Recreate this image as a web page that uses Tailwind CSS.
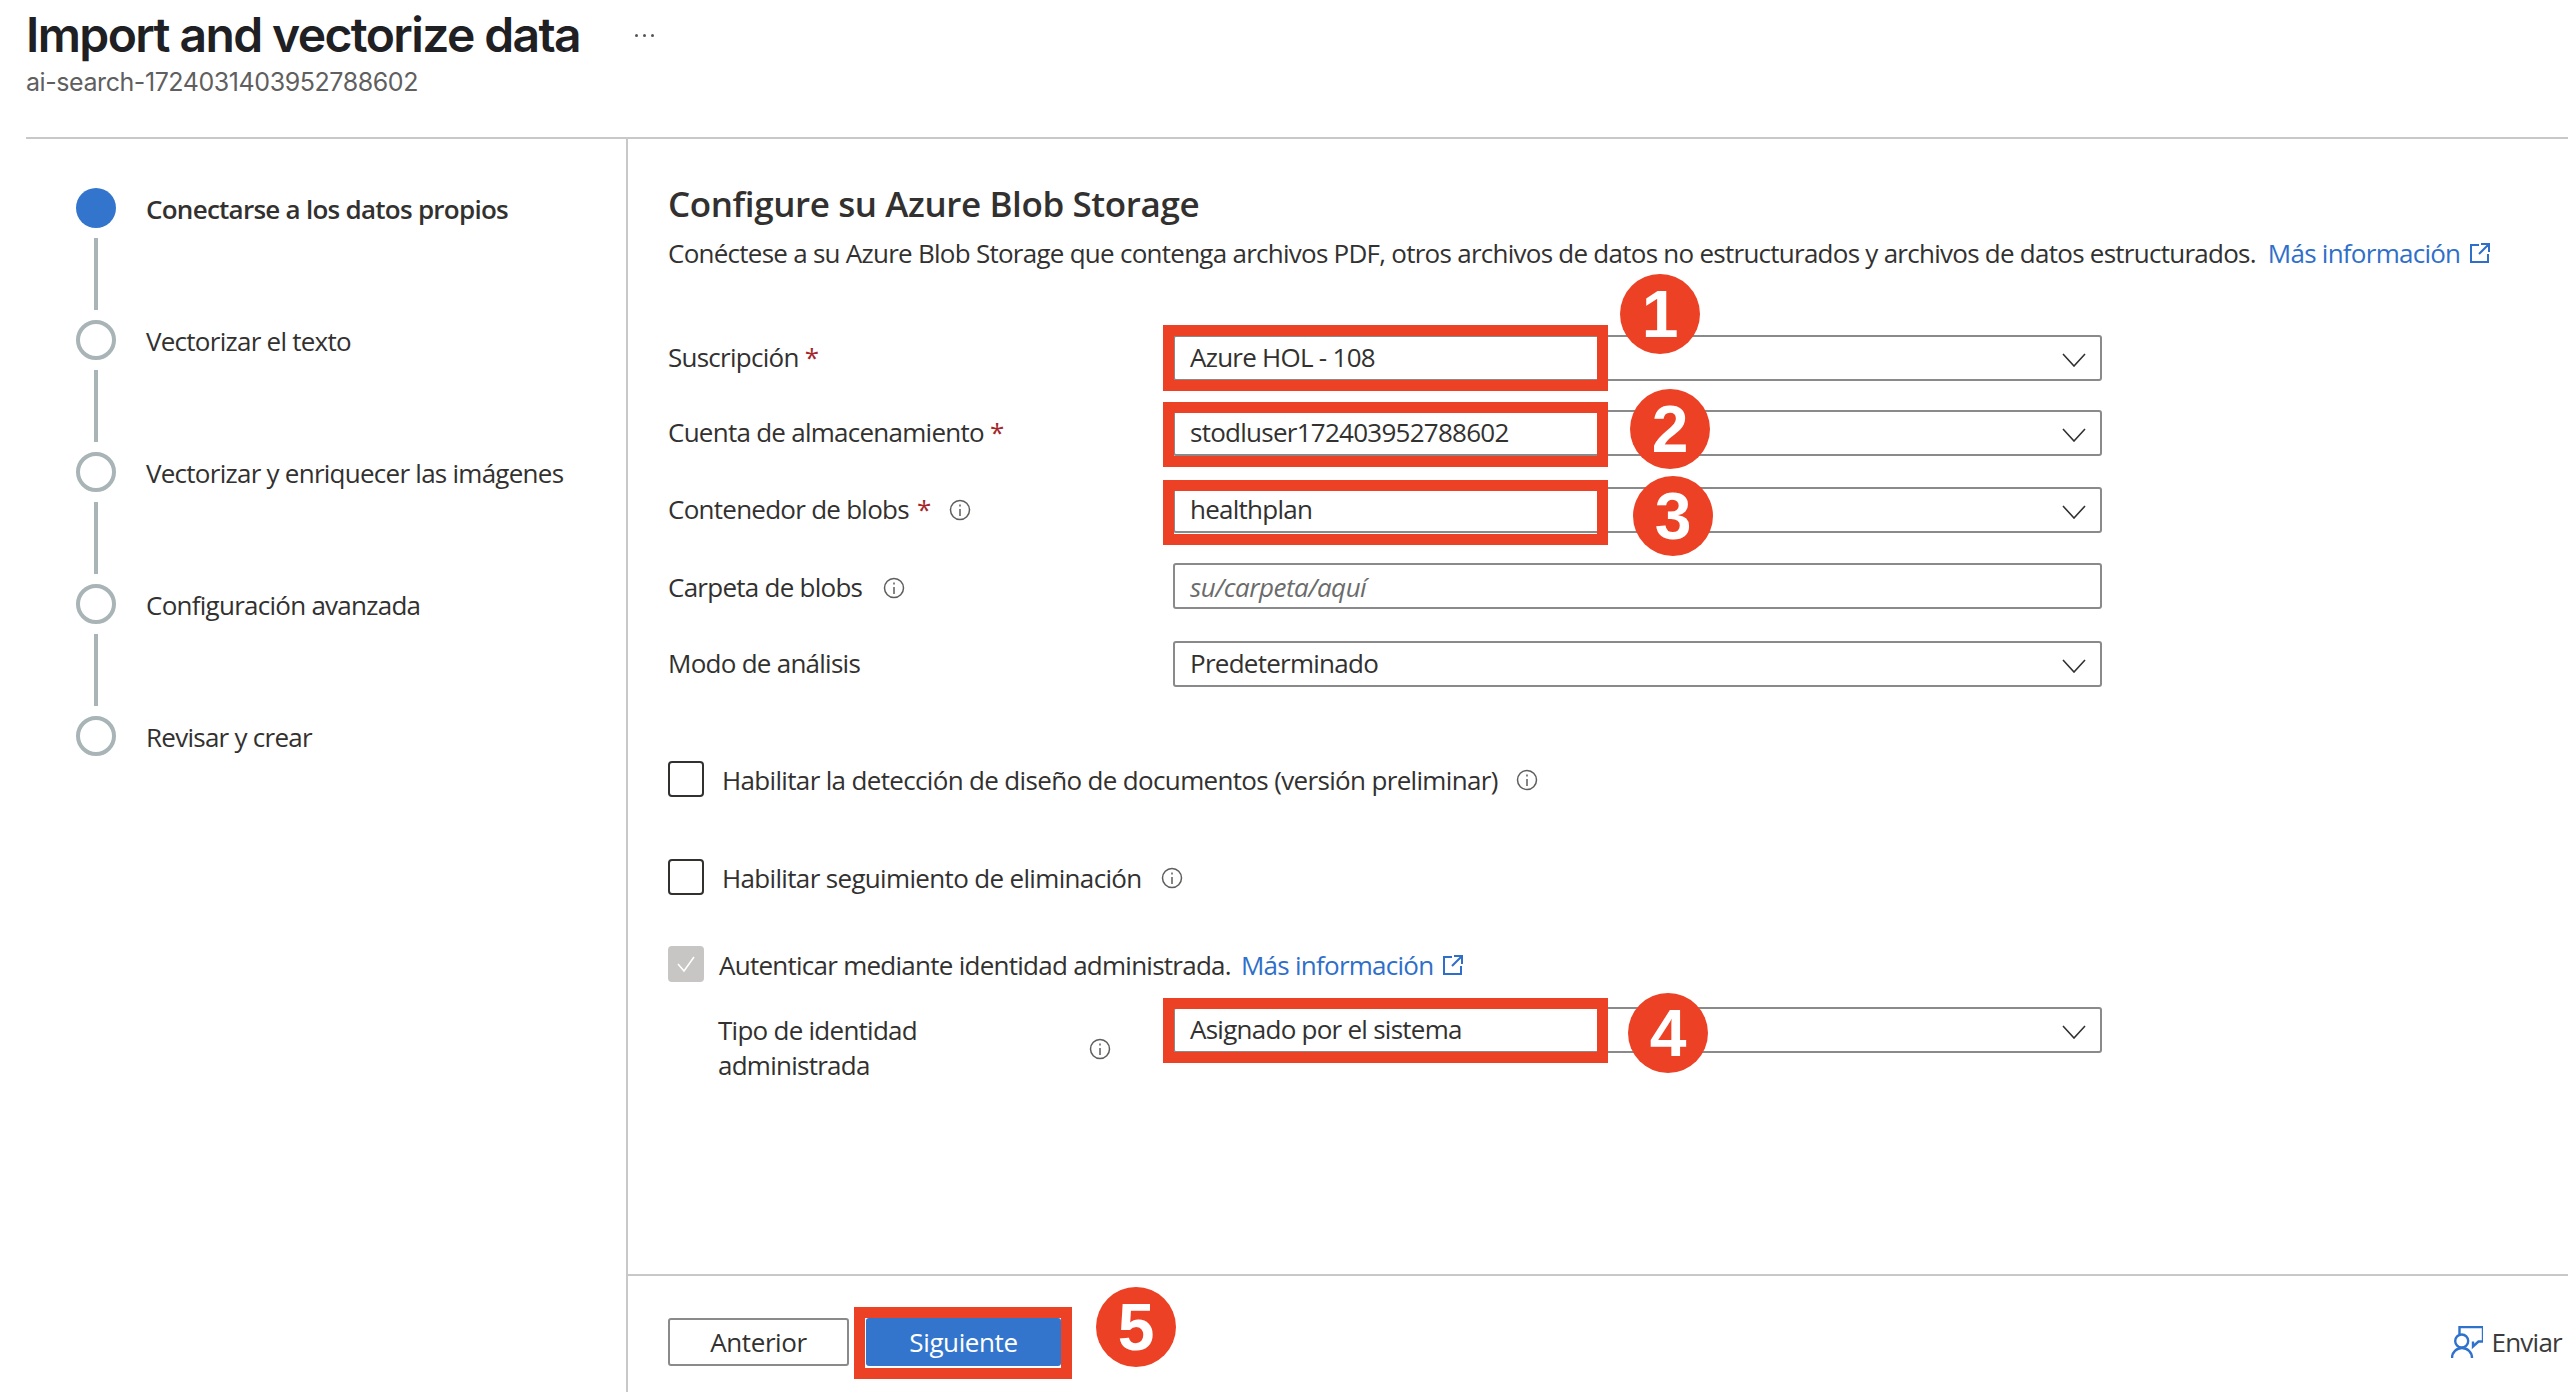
<!doctype html>
<html lang="es"><head><meta charset="utf-8"><title>Import and vectorize data</title>
<script src="https://cdn.jsdelivr.net/npm/@tailwindcss/browser@4"></script></head>
<body class="relative w-[2568px] h-[1392px] overflow-hidden bg-white text-[#323130] text-[26px] leading-[35px] font-['Open_Sans',sans-serif] tracking-[-0.74px]">
<header class="h-[137px] pl-[26px] font-['Inter',sans-serif] tracking-normal">
  <div class="flex items-center h-[70px]">
    <h1 class="text-[48px] leading-[70px] font-semibold tracking-[-1.6px] text-[#1f2023] w-[608px]">Import and vectorize data</h1>
    <span class="flex gap-[5px] ml-[1px]"><i class="w-[3px] h-[3px] rounded-full bg-[#555]"></i><i class="w-[3px] h-[3px] rounded-full bg-[#555]"></i><i class="w-[3px] h-[3px] rounded-full bg-[#555]"></i></span>
  </div>
  <p class="mt-[2px] text-[25px] leading-[20px] text-[#5f5f5f] tracking-[-0.43px]">ai-search-1724031403952788602</p>
</header>
<div class="ml-[26px] h-[2px] bg-[#c8c8c8]"></div>
<div class="flex h-[1253px]">
  <aside class="w-[628px] shrink-0 border-r-2 border-[#c8c8c8] pt-[49px] pl-[76px]">
    <div class="flex items-center gap-[30px] h-[40px]"><span class="w-[40px] h-[40px] rounded-full bg-[#3375cd]"></span><span class="font-semibold pt-[3px]">Conectarse a los datos propios</span></div>
    <div class="w-[4px] h-[72px] bg-[#a8b4b6] my-[10px] ml-[18px]"></div>
    <div class="flex items-center gap-[30px] h-[40px]"><span class="w-[40px] h-[40px] rounded-full border-4 border-[#a8b4b6]"></span><span class="pt-[3px]">Vectorizar el texto</span></div>
    <div class="w-[4px] h-[72px] bg-[#a8b4b6] my-[10px] ml-[18px]"></div>
    <div class="flex items-center gap-[30px] h-[40px]"><span class="w-[40px] h-[40px] rounded-full border-4 border-[#a8b4b6]"></span><span class="pt-[3px]">Vectorizar y enriquecer las imágenes</span></div>
    <div class="w-[4px] h-[72px] bg-[#a8b4b6] my-[10px] ml-[18px]"></div>
    <div class="flex items-center gap-[30px] h-[40px]"><span class="w-[40px] h-[40px] rounded-full border-4 border-[#a8b4b6]"></span><span class="pt-[3px]">Configuración avanzada</span></div>
    <div class="w-[4px] h-[72px] bg-[#a8b4b6] my-[10px] ml-[18px]"></div>
    <div class="flex items-center gap-[30px] h-[40px]"><span class="w-[40px] h-[40px] rounded-full border-4 border-[#a8b4b6]"></span><span class="pt-[3px]">Revisar y crear</span></div>
  </aside>
  <main class="flex-1 flex flex-col">
    <section class="h-[1135px] pl-[40px] pt-[43px]">
      <h2 class="text-[35px] leading-[44px] font-semibold tracking-[-0.4px]">Configure su Azure Blob Storage</h2>
      <p class="mt-[9px] leading-[36px] flex items-center">Conéctese a su Azure Blob Storage que contenga archivos PDF, otros archivos de datos no estructurados y archivos de datos estructurados.<a class="ml-[12px] text-[#2f6fca] inline-flex items-center gap-[10px]">Más información <svg width="20" height="20" viewBox="0 0 20 20" fill="none" stroke="#2f6fca" stroke-width="2"><path d="M9 2H1v17h17v-8M11 1h8v8M19 1 9 11"/></svg></a></p>

      <div class="flex items-center h-[46px] mt-[64px]"><label class="w-[505px] shrink-0 pb-[1px]">Suscripción <span class="text-[#a4262c]">*</span></label>
        <div class="w-[929px] h-[46px] border-2 border-[#8a8a8a] rounded-[3px] flex items-center justify-between pl-[15px] pr-[14px]"><span class="pb-[1px]">Azure HOL - 108</span><svg class="mt-[3px]" width="24" height="14" viewBox="0 0 24 14" fill="none" stroke="#323130" stroke-width="1.6"><path d="M1 1l11 12L23 1"/></svg></div></div>
      <div class="flex items-center h-[46px] mt-[29px]"><label class="w-[505px] shrink-0 pb-[1px]">Cuenta de almacenamiento <span class="text-[#a4262c]">*</span></label>
        <div class="w-[929px] h-[46px] border-2 border-[#8a8a8a] rounded-[3px] flex items-center justify-between pl-[15px] pr-[14px]"><span class="pb-[1px]">stodluser172403952788602</span><svg class="mt-[3px]" width="24" height="14" viewBox="0 0 24 14" fill="none" stroke="#323130" stroke-width="1.6"><path d="M1 1l11 12L23 1"/></svg></div></div>
      <div class="flex items-center h-[46px] mt-[31px]"><label class="w-[505px] shrink-0 flex items-center pb-[1px]">Contenedor de blobs <span class="text-[#a4262c] ml-[8px]">*</span><svg class="ml-[18px]" width="22" height="22" viewBox="0 0 22 22" fill="none" stroke="#605e5c" stroke-width="1.5"><circle cx="11" cy="11" r="9.5"/><path d="M11 10v7M11 5.500v2"/></svg></label>
        <div class="w-[929px] h-[46px] border-2 border-[#8a8a8a] rounded-[3px] flex items-center justify-between pl-[15px] pr-[14px]"><span class="pb-[1px]">healthplan</span><svg class="mt-[3px]" width="24" height="14" viewBox="0 0 24 14" fill="none" stroke="#323130" stroke-width="1.6"><path d="M1 1l11 12L23 1"/></svg></div></div>
      <div class="flex items-center h-[46px] mt-[30px]"><label class="w-[505px] shrink-0 flex items-center pt-[3px]">Carpeta de blobs<svg class="ml-[21px]" width="22" height="22" viewBox="0 0 22 22" fill="none" stroke="#605e5c" stroke-width="1.5"><circle cx="11" cy="11" r="9.5"/><path d="M11 10v7M11 5.500v2"/></svg></label>
        <div class="w-[929px] h-[46px] border-2 border-[#8a8a8a] rounded-[3px] flex items-center pl-[15px] pt-[2px] italic text-[#6b6b6b] tracking-[-0.5px]"><span>su/carpeta/aquí</span></div></div>
      <div class="flex items-center h-[46px] mt-[32px]"><label class="w-[505px] shrink-0 pb-[1px]">Modo de análisis</label>
        <div class="w-[929px] h-[46px] border-2 border-[#8a8a8a] rounded-[3px] flex items-center justify-between pl-[15px] pr-[14px]"><span class="pb-[1px]">Predeterminado</span><svg class="mt-[3px]" width="24" height="14" viewBox="0 0 24 14" fill="none" stroke="#323130" stroke-width="1.6"><path d="M1 1l11 12L23 1"/></svg></div></div>

      <div class="flex items-center h-[36px] mt-[74px] tracking-[-0.66px]"><span class="w-[36px] h-[36px] border-2 border-[#323130] rounded-[4px]"></span><span class="ml-[18px] pt-[2px]">Habilitar la detección de diseño de documentos (versión preliminar)</span><svg class="ml-[18px] mt-[2px]" width="22" height="22" viewBox="0 0 22 22" fill="none" stroke="#605e5c" stroke-width="1.5"><circle cx="11" cy="11" r="9.5"/><path d="M11 10v7M11 5.500v2"/></svg></div>
      <div class="flex items-center h-[36px] mt-[62px] tracking-[-0.66px]"><span class="w-[36px] h-[36px] border-2 border-[#323130] rounded-[4px]"></span><span class="ml-[18px] pt-[2px]">Habilitar seguimiento de eliminación</span><svg class="ml-[19px] mt-[2px]" width="22" height="22" viewBox="0 0 22 22" fill="none" stroke="#605e5c" stroke-width="1.5"><circle cx="11" cy="11" r="9.5"/><path d="M11 10v7M11 5.500v2"/></svg></div>
      <div class="flex items-center h-[36px] mt-[51px]"><span class="w-[36px] h-[36px] rounded-[4px] bg-[#c8c6c4] flex items-center justify-center"><svg width="20" height="18" viewBox="0 0 20 18" fill="none" stroke="#fff" stroke-width="1.6"><path d="M2 9l6 7L18 2"/></svg></span><span class="ml-[15px] pt-[2px]">Autenticar mediante identidad administrada.</span><a class="ml-[10px] pt-[2px] text-[#2f6fca] inline-flex items-center gap-[10px]">Más información <svg width="20" height="20" viewBox="0 0 20 20" fill="none" stroke="#2f6fca" stroke-width="2"><path d="M9 2H1v17h17v-8M11 1h8v8M19 1 9 11"/></svg></a></div>
      <div class="flex items-start mt-[25px]"><div class="w-[505px] shrink-0 pl-[50px] flex items-start"><span class="w-[371px] pt-[6px] leading-[35px]">Tipo de identidad<br>administrada</span><svg class="mt-[31px]" width="22" height="22" viewBox="0 0 22 22" fill="none" stroke="#605e5c" stroke-width="1.5"><circle cx="11" cy="11" r="9.5"/><path d="M11 10v7M11 5.500v2"/></svg></div>
        <div class="w-[929px] h-[46px] border-2 border-[#8a8a8a] rounded-[3px] flex items-center justify-between pl-[15px] pr-[14px]"><span class="pb-[1px]">Asignado por el sistema</span><svg class="mt-[3px]" width="24" height="14" viewBox="0 0 24 14" fill="none" stroke="#323130" stroke-width="1.6"><path d="M1 1l11 12L23 1"/></svg></div></div>
    </section>
    <footer class="h-[118px] border-t-2 border-[#c8c8c8] pl-[40px] pr-[6px] pt-[16px] flex items-center">
      <div class="flex gap-[17px] items-center tracking-[-0.4px]">
        <button class="w-[181px] h-[48px] border-2 border-[#8a8a8a] rounded-[3px] font-medium">Anterior</button>
        <button class="w-[195px] h-[48px] bg-[#3375cd] rounded-[3px] text-white font-medium">Siguiente</button>
      </div>
      <div class="ml-auto flex items-center gap-[8px] text-[#3a3a3a]"><svg width="32" height="32" viewBox="0 0 32 32" fill="none" stroke="#2f72cc" stroke-width="2.4"><circle cx="10.700" cy="15" r="6.500"/><path d="M1 32a10 10 0 0 1 20 0M8.500 8V1H32V15.500H27.500L22 20.500V15.500"/></svg><span>Enviar</span></div>
    </footer>
  </main>
</div>

<!-- callouts drawn over the screenshot -->
<div class="absolute left-[1163px] top-[325px] w-[445px] h-[66px] border-[11px] border-[#ec4125]"></div>
<div class="absolute left-[1163px] top-[402px] w-[445px] h-[65px] border-[11px] border-[#ec4125]"></div>
<div class="absolute left-[1163px] top-[480px] w-[445px] h-[65px] border-[11px] border-[#ec4125]"></div>
<div class="absolute left-[1163px] top-[998px] w-[445px] h-[65px] border-[11px] border-[#ec4125]"></div>
<div class="absolute left-[854px] top-[1307px] w-[218px] h-[72px] border-[11px] border-[#ec4125]"></div>
<div class="absolute left-[1620px] top-[274px] w-[80px] h-[80px] rounded-full bg-[#ec4125] text-white flex items-center justify-center text-[66px] font-bold font-['Liberation_Sans',sans-serif] tracking-normal">1</div>
<div class="absolute left-[1630px] top-[389px] w-[80px] h-[80px] rounded-full bg-[#ec4125] text-white flex items-center justify-center text-[66px] font-bold font-['Liberation_Sans',sans-serif] tracking-normal">2</div>
<div class="absolute left-[1633px] top-[476px] w-[80px] h-[80px] rounded-full bg-[#ec4125] text-white flex items-center justify-center text-[66px] font-bold font-['Liberation_Sans',sans-serif] tracking-normal">3</div>
<div class="absolute left-[1628px] top-[993px] w-[80px] h-[80px] rounded-full bg-[#ec4125] text-white flex items-center justify-center text-[66px] font-bold font-['Liberation_Sans',sans-serif] tracking-normal">4</div>
<div class="absolute left-[1096px] top-[1287px] w-[80px] h-[80px] rounded-full bg-[#ec4125] text-white flex items-center justify-center text-[66px] font-bold font-['Liberation_Sans',sans-serif] tracking-normal">5</div>
</body></html>
